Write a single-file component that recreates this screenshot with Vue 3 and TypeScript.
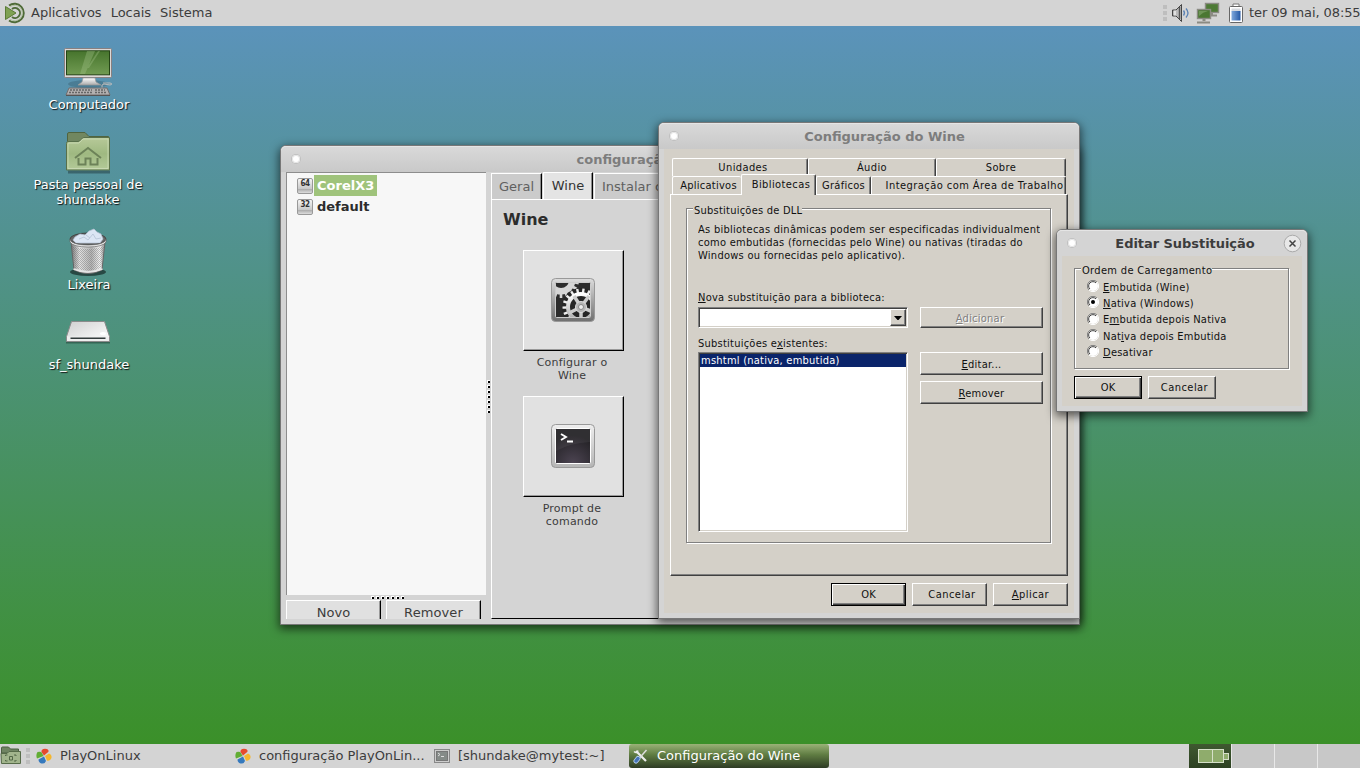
<script setup lang="ts">
interface Radio { id: number; pre: string; key: string; post: string; checked: boolean }

const menus: string[] = ['Aplicativos', 'Locais', 'Sistema']
const prefixes = [
  { bits: '64', name: 'CorelX3', selected: true },
  { bits: '32', name: 'default', selected: false },
]
const radios: Radio[] = [
  { id: 1, pre: '', key: 'E', post: 'mbutida (Wine)', checked: false },
  { id: 2, pre: '', key: 'N', post: 'ativa (Windows)', checked: true },
  { id: 3, pre: 'E', key: 'm', post: 'butida depois Nativa', checked: false },
  { id: 4, pre: 'Nat', key: 'i', post: 'va depois Embutida', checked: false },
  { id: 5, pre: '', key: 'D', post: 'esativar', checked: false },
]
const gripDots = [0, 1, 2, 3, 4, 5, 6]
const teeth: number[] = Array.from({ length: 18 }, (_, i) => i * 20)
</script>

<template>
  <div class="screen">
    <header class="panel top">
      <svg class="mate" width="22" height="22" viewBox="0 0 22 22">
        <path d="M1.500 4.500 12 11 1.500 17.500z" fill="#7fa152" stroke="#5b7a35" />
        <g fill="none" stroke="#4f6b37" stroke-width="1.900">
          <path d="M5 3.500A9.300 9.300 0 1 1 5 18.500" />
          <path d="M8 7A5 5 0 1 1 8 15" />
        </g>
        <path d="M6 4.800A7.700 7.700 0 1 1 6 17.200" fill="none" stroke="#a9bc94" stroke-width=".8" />
      </svg>
      <nav class="menus"><span v-for="m in menus" :key="m">{{ m }}</span></nav>
      <div class="tray">
        <span class="grip"><i /><i /><i /></span>
        <svg class="vol" width="20" height="20" viewBox="0 0 20 20">
          <path d="M1.500 7h3.500L10.500 1.500v17L5 13H1.500z" fill="#b9b9b9" stroke="#444" />
          <path d="M8.500 4v12" stroke="#555" stroke-width="1.500" />
          <path d="M4 7.500v5" stroke="#eee" stroke-width="1.500" />
          <path d="M12.500 7.500q2 2.500 0 5M15 5.500q4 4.500 0 9" fill="none" stroke="#5b83b5" stroke-width="1.300" />
        </svg>
        <svg class="net" width="24" height="22" viewBox="0 0 24 22">
          <g stroke="#8b8b83">
            <rect x="9.500" y="1.500" width="13" height="9" fill="#4d7a35" stroke-width="1.400" />
            <path d="M13 13.500h8M16 11v2" stroke-width="2" />
            <rect x="1.500" y="7.500" width="13" height="9" fill="#4a7732" stroke-width="1.400" />
            <path d="M8 17v2" stroke-width="3" /><path d="M1 20.500h13" stroke-width="2" />
          </g>
          <path d="M3 14V9h9q-5 1-9 5" fill="#87aa70" opacity=".6" />
        </svg>
        <svg class="bat" width="16" height="21" viewBox="0 0 16 21">
          <defs><linearGradient id="bg" x2="1" y2="0"><stop stop-color="#80a9dc" /><stop offset="1" stop-color="#2458a5" /></linearGradient></defs>
          <path d="M5 3.500V1h6v2.500" fill="#fff" stroke="#777" />
          <rect x="1.500" y="3.500" width="13" height="16" rx="1" fill="#fff" stroke="#666" />
          <rect x="3.500" y="5.500" width="9" height="3" fill="#d5d9df" />
          <rect x="3.500" y="8" width="9" height="9.500" fill="url(#bg)" />
        </svg>
        <time>ter 09 mai, 08:55</time>
      </div>
    </header>

    <main class="desktop">
      <figure class="item computer">
        <svg width="56" height="50" viewBox="0 0 56 50">
          <defs>
            <linearGradient id="scr" x2="0" y2="1"><stop stop-color="#46742d" /><stop offset="1" stop-color="#719b52" /></linearGradient>
            <linearGradient id="ped" x2="0" y2="1"><stop stop-color="#fff" /><stop offset="1" stop-color="#aaa" /></linearGradient>
          </defs>
          <ellipse cx="28" cy="37" rx="20" ry="4" opacity=".15" />
          <rect x="4.500" y="1.500" width="47" height="29" rx="1" fill="#ddd8d6" stroke="#888081" />
          <rect x="6.500" y="3.800" width="43" height="24" fill="url(#scr)" stroke="#244415" />
          <path d="M27 4h8L25 27h-5zM38 4h2L29 21h-2z" fill="#a6c58c" opacity=".35" />
          <path d="M23 31h12l1 4 5 3H18l4-3z" fill="url(#ped)" stroke="#999" stroke-width=".7" />
          <path d="M42 41v-3l2-1 6 1q4-1 0-2h-7" fill="none" stroke="#bbb" />
          <path d="M9 41h38l3 7H6z" fill="#b3b0b0" stroke="#726d6d" />
          <path d="M10 43h22M9 45.500h24M35 43h10M35 45.500h12" stroke="#666" stroke-width="1.500" stroke-dasharray="2 1" />
          <path d="M6 48.500h44" stroke="#555" />
        </svg>
        <figcaption>Computador</figcaption>
      </figure>
      <figure class="item home">
        <svg width="50" height="44" viewBox="0 0 50 44">
          <defs><linearGradient id="fold" x2="0" y2="1"><stop stop-color="#b7c999" /><stop offset=".5" stop-color="#9fb981" /><stop offset="1" stop-color="#b4ca99" /></linearGradient></defs>
          <path d="M5 41h42" stroke="#000" stroke-width="3" opacity=".3" />
          <path d="M4.500 14V3q0-1.500 1.500-1.500h16l4 4h19.500V14z" fill="#718760" stroke="#50643f" />
          <path d="M3.500 12.500q0-2 1.500-2h10q1.500 0 3-2t3-2h25.500v32.500h-43z" fill="url(#fold)" stroke="#59704a" />
          <path d="M5 13.500 6 12h10l4-4h25v29.500H5z" fill="none" stroke="#d1dfbd" opacity=".7" />
          <path d="M12 27 25 17l13 10M15.500 27v6.500h7v-6h5v6h7V27" fill="none" stroke="#6c8258" stroke-width="2" />
        </svg>
        <figcaption>Pasta pessoal de<br />shundake</figcaption>
      </figure>
      <figure class="item trash">
        <svg width="44" height="50" viewBox="0 0 44 50">
          <defs>
            <linearGradient id="can" x2="1" y2="0"><stop stop-color="#777" /><stop offset=".25" stop-color="#e4e4e4" /><stop offset=".6" stop-color="#b5b5b5" /><stop offset=".85" stop-color="#f3f3f3" /><stop offset="1" stop-color="#888" /></linearGradient>
            <pattern id="mesh" width="2" height="2" patternUnits="userSpaceOnUse"><rect width="1" height="1" fill="#555" opacity=".35" /><rect x="1" y="1" width="1" height="1" fill="#555" opacity=".35" /></pattern>
          </defs>
          <ellipse cx="22" cy="44" rx="18" ry="4" opacity=".5" />
          <ellipse cx="22" cy="11" rx="18" ry="6" fill="#666" stroke="#444" />
          <path d="M7 12 9 9l5-3 5 1 4-4 5-2 3 3 4 2 2 5-3 4H10z" fill="#dce6f4" stroke="#b4c2d4" stroke-width=".7" />
          <path d="m13 11 5-2 4 3 5-6 3 5 5-1M20 7l4 3" fill="none" stroke="#b5c3d6" stroke-width=".8" />
          <path d="M5 14q17 7 34 0l-3 28q-14 7-28 0z" fill="url(#can)" stroke="#666" />
          <path d="M6 18q16 6 32 0l-3 22q-13 5-26 0z" fill="url(#mesh)" />
          <path d="M4 11q1 6 18 6t18-6v3q-3 5-18 5T4 14z" fill="#eee" stroke="#666" stroke-width=".7" />
          <path d="M7.500 41q14 6 29 0" fill="none" stroke="#e5e5e5" stroke-width="1.500" />
        </svg>
        <figcaption>Lixeira</figcaption>
      </figure>
      <figure class="item drive">
        <svg width="46" height="25" viewBox="0 0 46 25">
          <defs><linearGradient id="drv" x2="1" y2="1"><stop stop-color="#d0d0d0" /><stop offset="1" stop-color="#fff" /></linearGradient></defs>
          <path d="M1 22h44" stroke="#000" stroke-width="3" opacity=".3" />
          <path d="M6.500 1.500h33l5 15v5h-43v-5z" fill="url(#drv)" stroke="#8b8b8b" />
          <path d="M2 16.500h42v4.500H2z" fill="#eee" />
          <path d="M5.500 17.500h35v1.500h-35z" fill="#333b3b" /><ellipse cx="38" cy="13.500" rx="3" ry="1.500" fill="#fff" />
        </svg>
        <figcaption>sf_shundake</figcaption>
      </figure>

      <section class="window pol">
        <div class="title"><i class="knob" /><b>configuração PlayOnLinux</b></div>
        <div class="polbody">
          <div class="side">
            <ul class="prefixes">
              <li v-for="p in prefixes" :key="p.name" :class="{ sel: p.selected }">
                <span class="disk">{{ p.bits }}</span><b>{{ p.name }}</b>
              </li>
            </ul>
            <div class="hgrip"><i v-for="d in gripDots" :key="d" /></div>
            <div class="sidebtns"><button>Novo</button><button>Remover</button></div>
          </div>
          <div class="vgrip"><i v-for="d in gripDots" :key="d" /></div>
          <div class="notebook">
            <div class="ntabs"><span>Geral</span><span class="on">Wine</span><span class="wide">Instalar componentes</span></div>
            <div class="npage">
              <h2>Wine</h2>
              <div class="launcher">
                <div class="big">
                  <svg width="46" height="46" viewBox="0 0 46 46">
                    <defs>
                      <linearGradient id="fr" x2="0" y2="1"><stop stop-color="#ddd" /><stop offset="1" stop-color="#6f6f6f" /></linearGradient>
                      <linearGradient id="gr" x2="0" y2="1"><stop stop-color="#fff" /><stop offset="1" stop-color="#aaa" /></linearGradient>
                      <clipPath id="cg"><rect x="6" y="6" width="34" height="34" /></clipPath>
                    </defs>
                    <rect x="1.500" y="1.500" width="43" height="43" rx="4" fill="url(#fr)" stroke="#999" />
                    <rect x="5.500" y="5.500" width="35" height="35" rx="1" fill="#2c2c2c" stroke="#ccc" />
                    <g clip-path="url(#cg)">
                      <g transform="translate(11 3)" fill="#d5d5d5">
                        <rect v-for="t in teeth" :key="t" x="-1.300" y="-18" width="2.600" height="5" :transform="`rotate(${t})`" />
                        <circle r="14.500" /><circle r="8" fill="#2c2c2c" />
                      </g>
                      <g transform="translate(31 30)">
                        <circle r="19" fill="#262626" />
                        <rect v-for="t in teeth" :key="t" x="-1.200" y="-18.500" width="2.400" height="5" fill="#eee" :transform="`rotate(${t + 8})`" />
                        <circle r="13" fill="none" stroke="url(#gr)" stroke-width="4" />
                        <path d="M0 0-7-11M0 0 8-11M0 0-12 6M0 0 12 5M0 0v13" stroke="#ccc" stroke-width="3.500" />
                        <circle r="5.500" fill="#b5b5b5" stroke="#ddd" /><circle r="2.500" fill="#eee" stroke="#888" />
                      </g>
                    </g>
                  </svg>
                </div>
                <p>Configurar o<br />Wine</p>
              </div>
              <div class="launcher">
                <div class="big">
                  <svg width="46" height="46" viewBox="0 0 46 46">
                    <defs>
                      <linearGradient id="ft" x2="0" y2="1"><stop stop-color="#eee" /><stop offset="1" stop-color="#b5b5b5" /></linearGradient>
                      <radialGradient id="tb" cx=".5" cy="1" r=".8"><stop stop-color="#4d4553" /><stop offset="1" stop-color="#242226" /></radialGradient>
                    </defs>
                    <rect x="1.500" y="1.500" width="43" height="43" rx="4" fill="url(#ft)" stroke="#999" />
                    <rect x="5.500" y="5.500" width="35" height="35" rx="1" fill="url(#tb)" stroke="#fff" />
                    <path d="M6 6h34v13Q20 20 6 28z" fill="#fff" opacity=".06" />
                    <path d="m11 11 5 3-5 3M17 18.500h6" fill="none" stroke="#fff" stroke-width="1.900" />
                  </svg>
                </div>
                <p>Prompt de<br />comando</p>
              </div>
            </div>
          </div>
        </div>
      </section>

      <section class="window cfg">
        <div class="title"><i class="knob" /><b>Configuração do Wine</b></div>
        <div class="client">
          <div class="wtabs r1"><span class="a">Unidades</span><span class="b">Áudio</span><span class="c">Sobre</span></div>
          <div class="wtabs r2"><span class="d">Aplicativos</span><span class="e on">Bibliotecas</span><span class="f">Gráficos</span><span class="g">Integração com Área de Trabalho</span></div>
          <div class="pane">
            <fieldset class="group dll">
              <legend>Substituições de DLL</legend>
              <p>As bibliotecas dinâmicas podem ser especificadas individualmente<br />como embutidas (fornecidas pelo Wine) ou nativas (tiradas do<br />Windows ou fornecidas pelo aplicativo).</p>
              <div class="cols">
                <div class="left">
                  <label><u>N</u>ova substituição para a biblioteca:</label>
                  <div class="combo"><span><svg width="8" height="4" viewBox="0 0 8 4"><path d="M0 0h8L4.500 4h-1z" /></svg></span></div>
                  <label class="ex">Substituições e<u>x</u>istentes:</label>
                  <div class="listbox"><div>mshtml (nativa, embutida)</div></div>
                </div>
                <div class="right">
                  <button class="btn off"><span><u>A</u>dicionar</span></button>
                  <button class="btn"><span><u>E</u>ditar...</span></button>
                  <button class="btn"><span><u>R</u>emover</span></button>
                </div>
              </div>
            </fieldset>
          </div>
          <div class="actions">
            <button class="btn def"><span>OK</span></button>
            <button class="btn"><span class="shift">Cancelar</span></button>
            <button class="btn"><span><u>A</u>plicar</span></button>
          </div>
        </div>
      </section>

      <section class="window dlg">
        <div class="title active">
          <i class="knob" /><b>Editar Substituição</b>
          <svg class="close" width="19" height="19" viewBox="0 0 19 19">
            <circle cx="9.500" cy="9.500" r="8.300" fill="#e8e8e8" stroke="#aaa" />
            <path d="m6.500 6.500 6 6m0-6-6 6" stroke="#444" stroke-width="1.500" />
          </svg>
        </div>
        <div class="client">
          <fieldset class="group order">
            <legend>Ordem de Carregamento</legend>
            <label v-for="r in radios" :key="r.id">
              <svg width="12" height="12" viewBox="0 0 12 12">
                <circle cx="6" cy="6" r="5" fill="#fff" />
                <path d="M2 10A5.500 5.500 0 0 1 10 2" fill="none" stroke="#808080" />
                <path d="M2.900 9A4.300 4.300 0 0 1 9 2.900" fill="none" stroke="#404040" />
                <path d="M10 2A5.500 5.500 0 0 1 2 10" fill="none" stroke="#fff" />
                <circle v-if="r.checked" cx="6" cy="6" r="2" />
              </svg>
              <span>{{ r.pre }}<u>{{ r.key }}</u>{{ r.post }}</span>
            </label>
          </fieldset>
          <div class="actions">
            <button class="btn def"><span>OK</span></button>
            <button class="btn"><span class="shift">Cancelar</span></button>
          </div>
        </div>
      </section>
    </main>

    <footer class="panel bottom">
      <svg class="show" width="22" height="20" viewBox="0 0 22 20">
        <path d="M1.500 7V2q0-1 1-1h6l2 2h8v4z" fill="#6f8462" stroke="#4c5f42" />
        <path d="M1 7.500h6l2-2h11.500v12h-19z" fill="#a1b48c" stroke="#566b49" />
        <path d="M5.500 10V9h2M14 9h2v1M5.500 14v1h2M14 15h2v-1M9.500 10.500h3v3.500h-3z" fill="none" stroke="#526747" />
      </svg>
      <span class="grip"><i /><i /><i /></span>
      <div class="task t1">
        <svg width="16" height="16" viewBox="0 0 16 16"><path d="M8 7.500 5.500 4Q5 1 9 .8q4 0 3.500 3z" fill="#e64a2c" /><path d="M7.500 8 1 10.500Q-.5 7 1.500 4 5 3 6 5z" fill="#62ad34" /><path d="M9 8 13 5.500q3 1 2.500 4.500-1.500 3.500-4.500 2.500z" fill="#f5b62d" /><path d="m8 8.500 2 4.500q-1 3-4.500 2.500-3-1-3-4z" fill="#3579bd" /></svg>
        <span>PlayOnLinux</span>
      </div>
      <div class="task t2">
        <svg width="16" height="16" viewBox="0 0 16 16"><path d="M8 7.500 5.500 4Q5 1 9 .8q4 0 3.500 3z" fill="#e64a2c" /><path d="M7.500 8 1 10.500Q-.5 7 1.500 4 5 3 6 5z" fill="#62ad34" /><path d="M9 8 13 5.500q3 1 2.500 4.500-1.500 3.500-4.500 2.500z" fill="#f5b62d" /><path d="m8 8.500 2 4.500q-1 3-4.500 2.500-3-1-3-4z" fill="#3579bd" /></svg>
        <span>configuração PlayOnLin...</span>
      </div>
      <div class="task t3">
        <svg width="16" height="16" viewBox="0 0 16 16"><rect x=".5" y="1.500" width="15" height="13" fill="#ccc" stroke="#888" /><rect x="2.500" y="3.500" width="11" height="9" fill="#858b88" stroke="#777" /><path d="m4 5 2 1.500L4 8m3 .5h3" fill="none" stroke="#ddd" /></svg>
        <span>[shundake@mytest:~]</span>
      </div>
      <div class="task t4">
        <svg width="16" height="16" viewBox="0 0 16 16"><path d="m3 3 10 10" stroke="#eee" stroke-width="2.200" /><path d="M1 3.500q3 2.500 4-1" fill="none" stroke="#eee" stroke-width="1.500" /><path d="m13.500 2-7 8" stroke="#ddd" stroke-width="1.500" /><path d="m5 10.500-2 2.500" stroke="#b9d2f1" stroke-width="5" stroke-linecap="round" /><path d="m5 10.500-2 2.500" stroke="#4573b6" stroke-width="3.500" stroke-linecap="round" /></svg>
        <span>Configuração do Wine</span>
      </div>
      <div class="pager"><div class="cur"><i class="w1" /><i class="w2" /><i class="w3" /></div><div /><div /><div /></div>
    </footer>
  </div>
</template>

<style>
body { margin: 0; overflow: hidden; }
</style>

<style scoped>
.screen { width: 1360px; height: 768px; display: flex; flex-direction: column; overflow: hidden; font: 13px "DejaVu Sans", sans-serif; color: #3c3c3c; }
.screen * { box-sizing: border-box; }
.screen button { font: inherit; color: inherit; letter-spacing: inherit; padding: 0; margin: 0; border-radius: 0; }
svg { display: block; flex: none; }
u { text-decoration: underline; text-underline-offset: 1px; text-decoration-thickness: 1px; text-decoration-skip-ink: none; }
.panel { display: flex; align-items: center; background: #d4d4d4; flex: none; white-space: nowrap; }
.top { height: 26px; padding-left: 4px; }
.menus { display: flex; gap: 9px; margin-left: 5px; line-height: 26px; }
.tray { margin-left: auto; display: flex; align-items: center; }
.grip { display: flex; flex-direction: column; gap: 2px; }
.grip i { width: 4px; height: 4px; background: #bebebe; }
.vol { margin-left: 4px; }
.net { margin-left: 5px; }
.bat { margin-left: 8px; }
time { margin-left: 5px; line-height: 26px; width: 111px; letter-spacing: -.1px; }

.desktop { position: relative; flex: 1; background: linear-gradient(#5b93ba, #3b9029); }
.item { position: absolute; margin: 0; width: 160px; left: 9px; display: flex; flex-direction: column; align-items: center; text-align: center; color: #fff; line-height: 15px; text-shadow: 1px 1px 1px #111; }
.computer { top: 21px; }
.computer svg { margin-left: -2px; }
.home { top: 105px; left: 8px; }
.home figcaption { margin-top: 2px; }
.trash { top: 202px; }
.trash svg { margin-left: -2px; }
.trash figcaption { margin-top: -1px; }
.drive { top: 294px; }
.drive svg { margin-left: -2px; }
.drive figcaption { margin-top: 12px; }

.window { position: absolute; border: 1px solid #777; border-radius: 6px 6px 0 0; background: #d4d4d4; box-shadow: 0 3px 10px 1px rgba(0, 0, 0, .6); display: flex; flex-direction: column; }
.title { height: 26px; flex: none; display: flex; align-items: center; justify-content: center; position: relative; border-radius: 5px 5px 0 0; background: linear-gradient(#d9d9d9, #c9c9c9); color: #7d7d7d; box-shadow: inset 0 1px #e5e5e5; }
.title.active { color: #3c3c3c; background: #d4d4d4; }
.knob { position: absolute; left: 11px; top: 9px; width: 8px; height: 8px; border-radius: 50%; background: #fff; box-shadow: inset 0 0 0 1px #e4e4e4, 0 0 0 1px #c0c0c0; }
.close { position: absolute; right: 5px; top: 4px; }

.pol { left: 280px; top: 119px; width: 800px; height: 480px; }
.pol .title { padding-right: 17px; }
.polbody { display: flex; flex: 1; padding: 0 5px 5px; min-height: 0; }
.side { width: 200px; display: flex; flex-direction: column; }
.prefixes { list-style: none; margin: 0; padding: 2px 0 0 10px; height: 423px; background: #f7f7f7; border: solid #8d8d8d; border-width: 1px 0 0 1px; flex: none; color: #2c2c2c; }
.prefixes li { display: flex; align-items: center; height: 21px; }
.prefixes b { padding: 0 3px; line-height: 21px; }
.prefixes .sel b { background: #9fc37b; color: #fff; }
.disk { width: 16px; height: 16px; margin-right: 1px; border: 1px solid #999; border-radius: 2px; background: linear-gradient(#f5f5f5, #c8c8c8 70%, #aaa 72%, #ddd); font: bold 8px/10px "DejaVu Sans Condensed", "DejaVu Sans", sans-serif; text-align: center; color: #333; letter-spacing: -.5px; }
.hgrip { height: 5px; padding: 1px 0 0 85px; display: flex; gap: 2px; }
.hgrip i, .vgrip i { width: 3px; height: 3px; border: solid #fff; border-width: 1px 0 0 1px; background: #000; flex: none; }
.sidebtns { display: flex; gap: 5px; height: 19px; overflow: hidden; }
.sidebtns button { width: 95px; height: 25px; background: #e0e0e0; border: solid; border-width: 1px 1px 0 1px; border-color: #fff #000 #000 #fff; box-shadow: inset -1px 0 #999; line-height: 24px; letter-spacing: .1px; }
.vgrip { width: 5px; padding: 208px 0 0 1px; display: flex; flex-direction: column; gap: 2px; }
.notebook { flex: 1; min-width: 0; display: flex; flex-direction: column; }
.ntabs { display: flex; height: 27px; align-items: flex-end; color: #606060; }
.ntabs span { height: 26px; width: 51px; background: #cbcbcb; border: solid; border-width: 1px 1px 0 1px; border-color: #fff #000 #fff #fff; line-height: 26px; text-align: center; box-shadow: inset -1px 0 #8a8a8a; }
.ntabs .on { height: 27px; width: 50px; margin-left: 1px; background: #e4e4e4; color: #333; line-height: 25px; }
.ntabs .wide { width: 165px; margin-left: 1px; text-align: left; padding-left: 7px; }
.npage { flex: 1; border: solid; border-width: 1px 0 1px 1px; border-color: #fff #000 #000 #fff; padding: 10px 0 0 11px; }
h2 { margin: 0; font-size: 16px; line-height: 20px; color: #2c2c2c; }
.launcher { width: 101px; height: 146px; margin-left: 20px; font-size: 11px; line-height: 13px; text-align: center; }
h2 + .launcher { margin-top: 20px; }
.launcher p { margin: 5px 3px 0 0; letter-spacing: .2px; }
.big { width: 101px; height: 101px; display: flex; align-items: center; justify-content: center; padding: 0 2px 2px 0; background: #e1e1e1; border: 1px solid; border-color: #fff #000 #000 #fff; box-shadow: inset -1px -1px #999; }

.cfg { left: 658px; top: 96px; width: 422px; height: 497px; }
.cfg .title { padding-left: 31px; }
.client { flex: 1; margin: 0 5px 5px; background: #d4d0c8; color: #111; font: 11px/13px "DejaVu Sans Condensed", "DejaVu Sans", sans-serif; font-stretch: condensed; letter-spacing: .24px; display: flex; flex-direction: column; }
.cfg .client { padding: 9px 6px 0; white-space: nowrap; }
.wtabs { display: flex; height: 18px; margin-left: 2px; flex: none; letter-spacing: .4px; }
.wtabs span { height: 18px; line-height: 18px; text-align: center; border: solid; border-width: 1px 1px 0; border-color: #fff #404040 #fff #fff; border-radius: 2px 2px 0 0; box-shadow: inset -1px 0 #808080; }
.wtabs .a { width: 136px; padding-left: 6px; }
.wtabs .b { width: 128px; }
.wtabs .c { width: 130px; }
.wtabs .d { width: 69px; padding-left: 3px; border-right: 0; box-shadow: none; letter-spacing: .27px; }
.wtabs .e { width: 75px; padding-left: 5px; height: 21px; margin-top: -2px; background: #d4d0c8; position: relative; z-index: 1; line-height: 19px; }
.wtabs .f { width: 55px; letter-spacing: .27px; }
.wtabs .g { width: 195px; padding-left: 12px; letter-spacing: .45px; }
.pane { height: 382px; border: 1px solid; border-color: #fff #404040 #404040 #fff; box-shadow: inset -1px -1px #808080; padding: 9px 15px 0; flex: none; }
.group { margin: 0; padding: 0; border: 1px solid #808080; box-shadow: 1px 1px #fff, inset 1px 1px #fff; position: relative; z-index: 0; min-width: 0; }
.group legend { position: absolute; left: 7px; top: -5px; padding: 0 1px 0 0; line-height: 13px; }
.group legend::before { content: ""; position: absolute; z-index: -1; left: -1px; right: 1px; top: 3px; height: 5px; background: #d4d0c8; }
.dll { height: 335px; width: 365px; margin-top: 4px; padding: 14px 7px 0 11px; }
.dll p { margin: 0; width: 342px; height: 39px; overflow: hidden; letter-spacing: .27px; }
.cols { display: flex; justify-content: space-between; }
.left { width: 210px; padding-top: 29px; display: flex; flex-direction: column; }
.combo { margin-top: 3px; height: 21px; background: #fff; border: 1px solid; border-color: #808080 #fff #fff #808080; box-shadow: inset 1px 1px #404040, inset -1px -1px #d4d0c8; padding: 1px; display: flex; justify-content: flex-end; }
.combo span { width: 16px; height: 17px; background: #d4d0c8; border: 1px solid; border-color: #fff #404040 #404040 #fff; display: flex; align-items: center; justify-content: center; box-shadow: inset -1px -1px #808080; }
.ex { margin-top: 9px; }
.listbox { margin-top: 2px; height: 180px; background: #fff; border: 1px solid; border-color: #808080 #fff #fff #808080; box-shadow: inset 1px 1px #404040, inset -1px -1px #d4d0c8; padding: 1px; }
.listbox div { background: #0a246a; color: #fff; height: 13px; line-height: 14px; padding-left: 1px; }
.right { width: 123px; padding-top: 45px; display: flex; flex-direction: column; }
.btn { display: block; height: 23px; background: #d4d0c8; border: 1px solid; border-color: #fff #404040 #404040 #fff; box-shadow: inset -1px -1px #808080; line-height: 23px; text-align: center; }
.btn .shift { padding-left: 5px; }
.right .btn + .btn { margin-top: 6px; line-height: 24px; }
.right .btn.off { height: 21px; color: #808080; text-shadow: 1px 1px #fff; line-height: 21px; padding-right: 3px; }
.right .off + .btn { margin-top: 24px; }
.actions { display: flex; gap: 6px; }
.cfg .actions { justify-content: flex-end; margin-top: 7px; }
.actions .btn { width: 75px; letter-spacing: .45px; }
.btn.def { border-color: #000; box-shadow: inset 1px 1px #fff, inset -1px -1px #404040, inset -2px -2px #808080; letter-spacing: 0; }

.dlg { left: 1056px; top: 203px; width: 252px; height: 183px; }
.dlg .title { padding-left: 6px; letter-spacing: -.05px; }
.dlg .client { padding: 12px 12px 0; white-space: nowrap; }
.order { height: 101px; width: 215px; padding: 9px 0 0 12px; }
.order legend { letter-spacing: .33px; }
.order label { display: flex; align-items: center; height: 16.300px; gap: 4px; }
.order label span { position: relative; top: 1px; }
.dlg .actions { margin-top: 7px; }
.dlg .actions .btn { width: 68px; }

.bottom { height: 24px; }
.bottom .grip { margin-left: 4px; }
.task { display: flex; align-items: center; height: 24px; padding-left: 6px; line-height: 24px; }
.t1 { width: 199px; gap: 8px; }
.t2 { width: 199px; gap: 8px; }
.t3 { width: 201px; gap: 8px; }
.t4 { width: 200px; gap: 8px; padding-left: 4px; color: #fff; background: linear-gradient(#9ab277, #5f7c42 45%, #2d3b24); border-radius: 3px; }
.pager { margin-left: auto; display: flex; width: 171px; height: 24px; background: #c8c8c8; }
.pager div { width: 43px; border-left: 1px solid #e8e8e8; }
.pager .cur { width: 42px; display: flex; align-items: center; background: linear-gradient(#3f5930, #2d4122); border: 0; padding-left: 9px; }
.cur i { background: #8fac6c; border: 1px solid #d6e0c9; height: 14px; flex: none; }
.w1 { width: 15px; }
.w2 { width: 12px; margin-left: -1px; }
.cur .w3 { width: 6px; height: 7px; margin-left: -1px; }
</style>
